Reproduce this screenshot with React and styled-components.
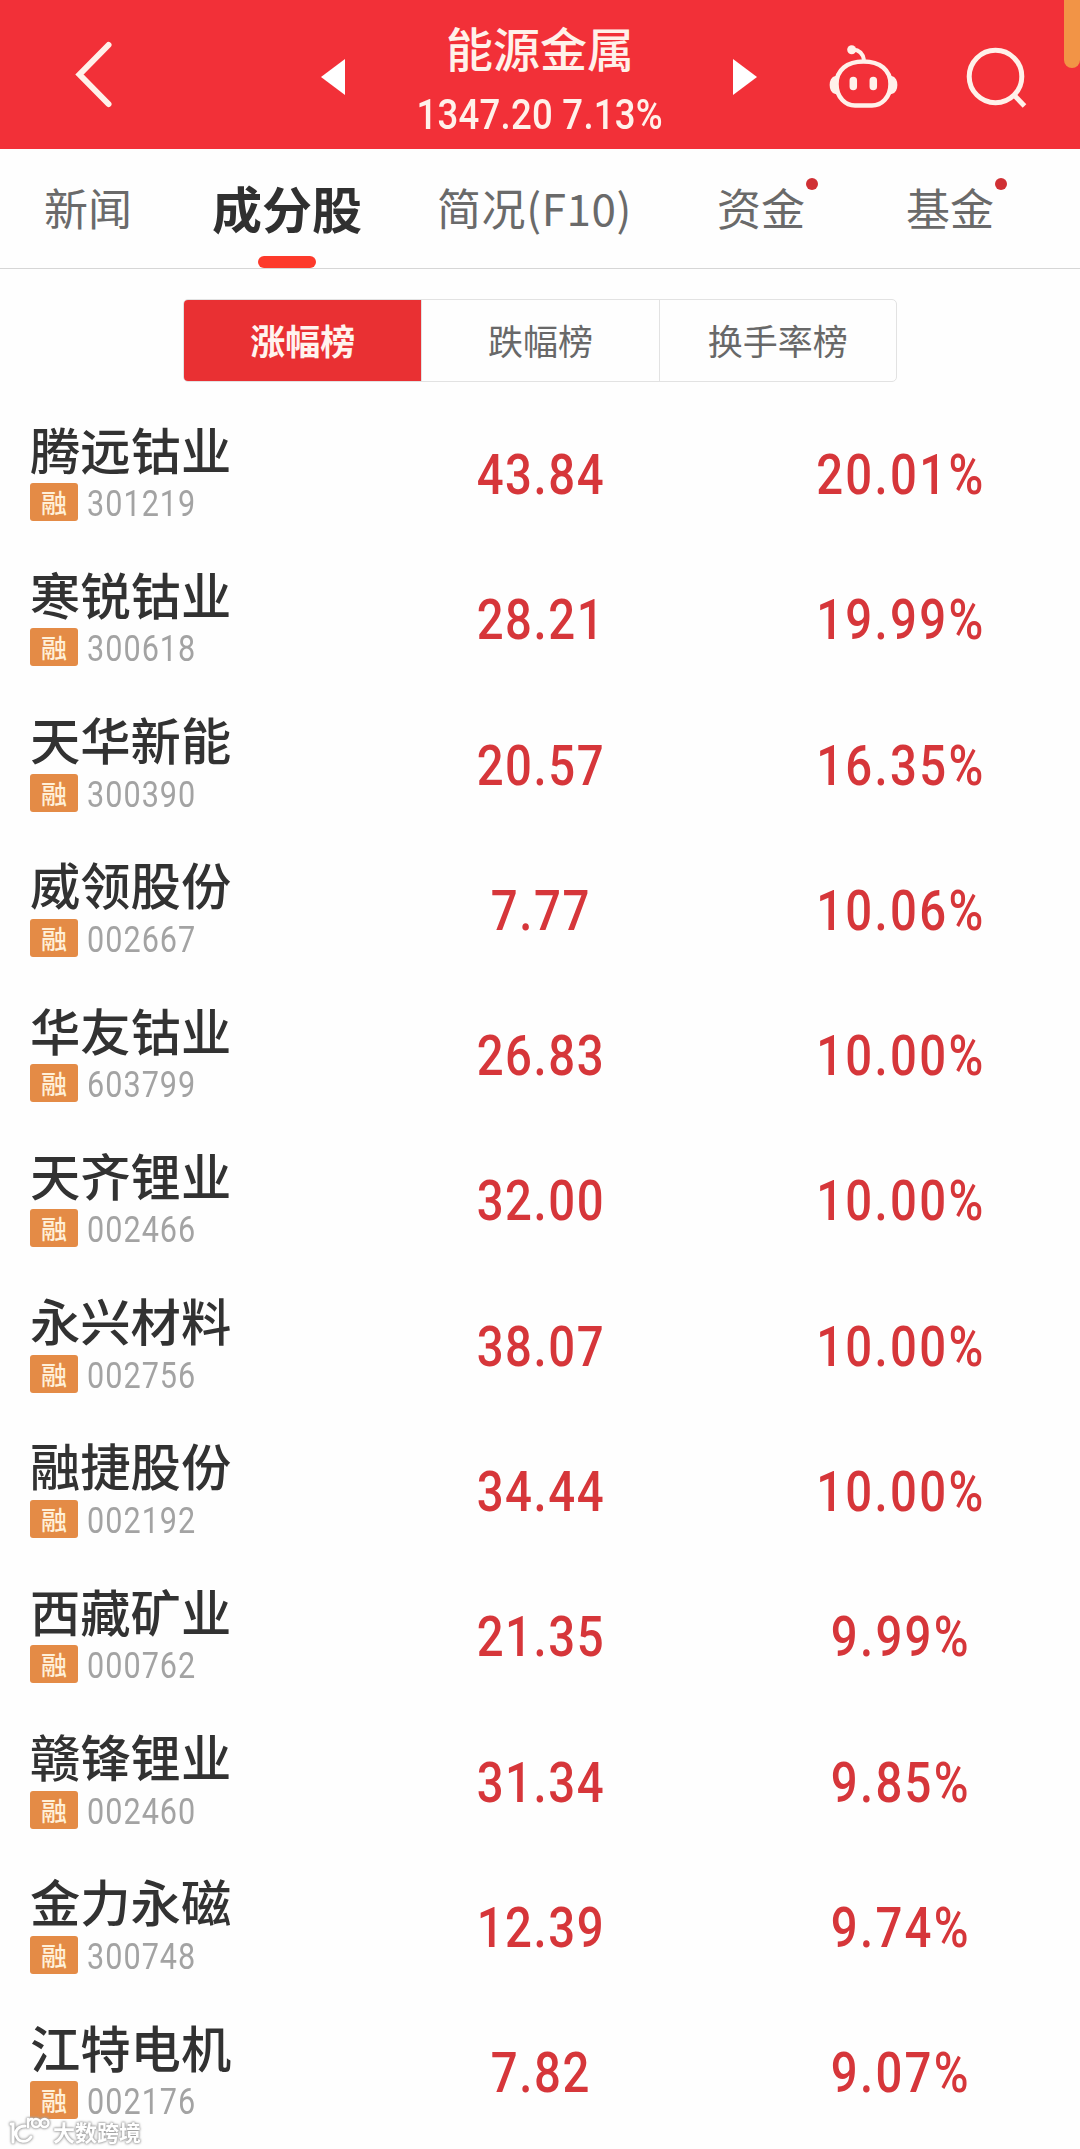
import styled, { createGlobalStyle } from "styled-components";

const tabs = [
  { id: "news", title: "新闻", left: 44 },
  { id: "parts", title: "成分股", left: 80, active: true },
  { id: "brief", title: "简况(F10)", left: 75, spacing: 0.6 },
  { id: "money", title: "资金", left: 85, dot: true },
  { id: "fund", title: "基金", left: 101, dot: true },
];

const rankings = ["涨幅榜", "跌幅榜", "换手率榜"];

const stocks = [
  { name: "腾远钴业", code: "301219", price: "43.84", change: "20.01%" },
  { name: "寒锐钴业", code: "300618", price: "28.21", change: "19.99%" },
  { name: "天华新能", code: "300390", price: "20.57", change: "16.35%" },
  { name: "威领股份", code: "002667", price: "7.77", change: "10.06%" },
  { name: "华友钴业", code: "603799", price: "26.83", change: "10.00%" },
  { name: "天齐锂业", code: "002466", price: "32.00", change: "10.00%" },
  { name: "永兴材料", code: "002756", price: "38.07", change: "10.00%" },
  { name: "融捷股份", code: "002192", price: "34.44", change: "10.00%" },
  { name: "西藏矿业", code: "000762", price: "21.35", change: "9.99%" },
  { name: "赣锋锂业", code: "002460", price: "31.34", change: "9.85%" },
  { name: "金力永磁", code: "300748", price: "12.39", change: "9.74%" },
  { name: "江特电机", code: "002176", price: "7.82", change: "9.07%" },
];

export default function App() {
  return (
    <>
      <GlobalStyle />
      <Page>
        <Header>
          <BackIcon viewBox="0 0 40 70">
            <path d="M34.500 5 L5.500 34.500 L34.500 64" />
          </BackIcon>
          <Switcher>
            <Arrow viewBox="0 0 24 36">
              <path d="M24 0 V36 L0 18 Z" />
            </Arrow>
            <Heading>
              <Title>能源金属</Title>
              <Quote>1347.20 7.13%</Quote>
            </Heading>
            <Arrow viewBox="0 0 24 36">
              <path d="M0 0 V36 L24 18 Z" />
            </Arrow>
          </Switcher>
          <Actions>
            <RobotIcon />
            <SearchIcon />
          </Actions>
          <EdgeHandle />
        </Header>

        <TabBar>
          {tabs.map((tab) => (
            <Tab key={tab.id} $active={tab.active} $left={tab.left} $spacing={tab.spacing}>
              {tab.title}
              {tab.dot && <Dot />}
            </Tab>
          ))}
        </TabBar>

        <Segment>
          {rankings.map((title, i) => (
            <SegmentItem key={title} $active={i === 0}>
              {title}
            </SegmentItem>
          ))}
        </Segment>

        <StockList>
          {stocks.map((stock) => (
            <StockRow key={stock.code} {...stock} />
          ))}
        </StockList>

        <Watermark>
          <WatermarkLogo />
          大数跨境
        </Watermark>
      </Page>
    </>
  );
}

function StockRow({ name, code, price, change }) {
  return (
    <Row>
      <NameCell>
        <Name>{name}</Name>
        <Meta>
          <Badge>融</Badge>
          <Code>{code}</Code>
        </Meta>
      </NameCell>
      <Figure $spacing={1.8}>{price}</Figure>
      <Figure $spacing={2.7}>{change}</Figure>
    </Row>
  );
}

function RobotIcon() {
  return (
    <svg width="70" height="64" viewBox="0 0 70 64" fill="none" stroke="#fff1ea" strokeWidth="4.500">
      <circle cx="22.700" cy="4.700" r="4.500" fill="#fff1ea" stroke="none" />
      <path d="M24 4.500 C31 5 34 9 35 15" strokeWidth="4" />
      <path d="M34.500 16.500 C51 16.500 61.500 25 61.500 39 C61.500 53 52 60.500 43 60.500 H26 C17 60.500 7.500 53 7.500 39 C7.500 25 18 16.500 34.500 16.500 Z" />
      <path d="M6.500 32 C0 33 0 47 6.500 48 Z M62.500 32 C69 33 69 47 62.500 48 Z" fill="#fff1ea" strokeWidth="2" />
      <path d="M24.300 35.500 V41.500 M44.300 35.500 V41.500" strokeWidth="7.500" strokeLinecap="round" />
    </svg>
  );
}

function SearchIcon() {
  return (
    <svg width="62" height="64" viewBox="0 0 62 64" fill="none" stroke="#fff1ea" strokeWidth="5">
      <circle cx="29.500" cy="31.500" r="26.300" />
      <path d="M47.500 49.500 L58.500 61" />
    </svg>
  );
}

function WatermarkLogo() {
  return (
    <svg width="42" height="30" viewBox="0 0 42 30" fill="none" stroke="#fff" strokeWidth="3" strokeLinecap="round">
      <path d="M3 8 H5 V26 M17 10 C10 10 7 15 8 19 C10 27 19 27 23 21" />
      <path d="M20 3 V11 M20 6 C21 3 23 3 24 3" strokeWidth="2.500" />
      <circle cx="28" cy="7" r="4" strokeWidth="2.500" />
      <circle cx="36.500" cy="7" r="4" strokeWidth="2.500" />
    </svg>
  );
}

const GlobalStyle = createGlobalStyle`
  * {
    box-sizing: border-box;
  }

  body {
    margin: 0;
    background: #fefefe;
    font-family: "Noto Sans CJK SC", sans-serif;
  }
`;

const Page = styled.div`
  position: relative;
  width: 1080px;
  height: 2149px;
  overflow: hidden;
`;

const Header = styled.header`
  position: relative;
  display: flex;
  align-items: center;
  height: 149px;
  background: #f23038;
`;

const BackIcon = styled.svg`
  width: 40px;
  height: 70px;
  margin-left: 74px;
  fill: none;
  stroke: #fff1ea;
  stroke-width: 6;
  stroke-linecap: round;
`;

const Switcher = styled.div`
  display: flex;
  align-items: center;
  justify-content: space-between;
  width: 436px;
  margin-left: 207px;
`;

const Arrow = styled.svg`
  width: 24px;
  height: 36px;
  margin-top: 4px;
  fill: #fff;
`;

const Heading = styled.div`
  display: flex;
  flex-direction: column;
  align-items: center;
  gap: 13px;
  padding: 7px 0 0 2px;
  color: #fff1ea;
  white-space: nowrap;
`;

const Title = styled.h1`
  margin: 0;
  font-size: 47px;
  font-weight: 500;
  line-height: 60px;
`;

const Quote = styled.div`
  font-family: Roboto, sans-serif;
  font-size: 42px;
  font-weight: 500;
  line-height: 50px;
  letter-spacing: 0.3px;
  transform: scaleX(0.87);
`;

const Actions = styled.div`
  display: flex;
  gap: 67px;
  margin-left: 72px;
  padding-top: 4px;
`;

const EdgeHandle = styled.div`
  position: absolute;
  top: 0;
  right: 0;
  width: 16px;
  height: 68px;
  background: #f29446;
  border-radius: 0 0 8px 8px;
`;

const TabBar = styled.nav`
  display: flex;
  height: 120px;
  border-bottom: 1px solid #d6d6d6;
`;

const Tab = styled.div`
  position: relative;
  margin-left: ${({ $left }) => $left}px;
  color: ${({ $active }) => ($active ? "#303030" : "#6a6a6a")};
  font-size: ${({ $active }) => ($active ? 50 : 44)}px;
  font-weight: ${({ $active }) => ($active ? 700 : 400)};
  line-height: 116px;
  letter-spacing: ${({ $spacing }) => $spacing || 0}px;
  white-space: nowrap;

  &::after {
    content: "";
    display: ${({ $active }) => ($active ? "block" : "none")};
    position: absolute;
    bottom: 0;
    left: 50%;
    width: 58px;
    height: 12px;
    margin-left: -29px;
    background: #fd3a2b;
    border-radius: 6px;
  }
`;

const Dot = styled.i`
  position: absolute;
  top: 29px;
  right: -13px;
  width: 12px;
  height: 12px;
  background: #d03034;
  border-radius: 50%;
`;

const Segment = styled.div`
  display: grid;
  grid-template-columns: repeat(3, 1fr);
  width: 714px;
  height: 83px;
  margin: 30px 0 0 183px;
  border: 1px solid #e2e2e2;
  border-radius: 5px;
  overflow: hidden;
`;

const SegmentItem = styled.div`
  color: ${({ $active }) => ($active ? "#fff3ee" : "#686868")};
  background: ${({ $active }) => ($active ? "#e93033" : "transparent")};
  font-size: 35px;
  font-weight: ${({ $active }) => ($active ? 700 : 400)};
  line-height: 79px;
  text-align: center;

  & + & {
    border-left: 1px solid #e2e2e2;
  }
`;

const StockList = styled.div`
  padding-top: 22px;
`;

const Row = styled.div`
  display: grid;
  grid-template-columns: repeat(3, 360px);
  height: 145.29px;
`;

const NameCell = styled.div`
  padding: 12.5px 0 0 30px;
`;

const Name = styled.div`
  color: #323232;
  font-size: 50.3px;
  font-weight: 500;
  line-height: 62px;
  white-space: nowrap;
`;

const Meta = styled.div`
  display: flex;
  align-items: center;
  gap: 9px;
  margin-top: 2.5px;
`;

const Badge = styled.span`
  width: 48px;
  height: 38px;
  color: #fff0d8;
  background: #e48b46;
  border-radius: 3px;
  font-size: 26px;
  font-weight: 500;
  line-height: 37px;
  text-align: center;
`;

const Code = styled.span`
  padding-top: 4px;
  color: #a3a3a3;
  font-family: Roboto, sans-serif;
  font-size: 36px;
  line-height: 38px;
  letter-spacing: 1.2px;
  transform: scaleX(0.85);
  transform-origin: left;
`;

const Figure = styled.div`
  padding: 21px 0 0 2px;
  color: #d6363a;
  font-family: Roboto, sans-serif;
  font-size: 55px;
  font-weight: 500;
  line-height: 100px;
  letter-spacing: ${({ $spacing }) => $spacing}px;
  text-align: center;
  transform: scaleX(0.86);
`;

const Watermark = styled.div`
  position: absolute;
  left: 8px;
  bottom: 3px;
  display: flex;
  align-items: center;
  gap: 3px;
  color: #fff;
  font-size: 22px;
  font-weight: 700;
  line-height: 30px;
  filter: drop-shadow(0 0 1px #999) drop-shadow(0 0 1px #aaa);
`;
